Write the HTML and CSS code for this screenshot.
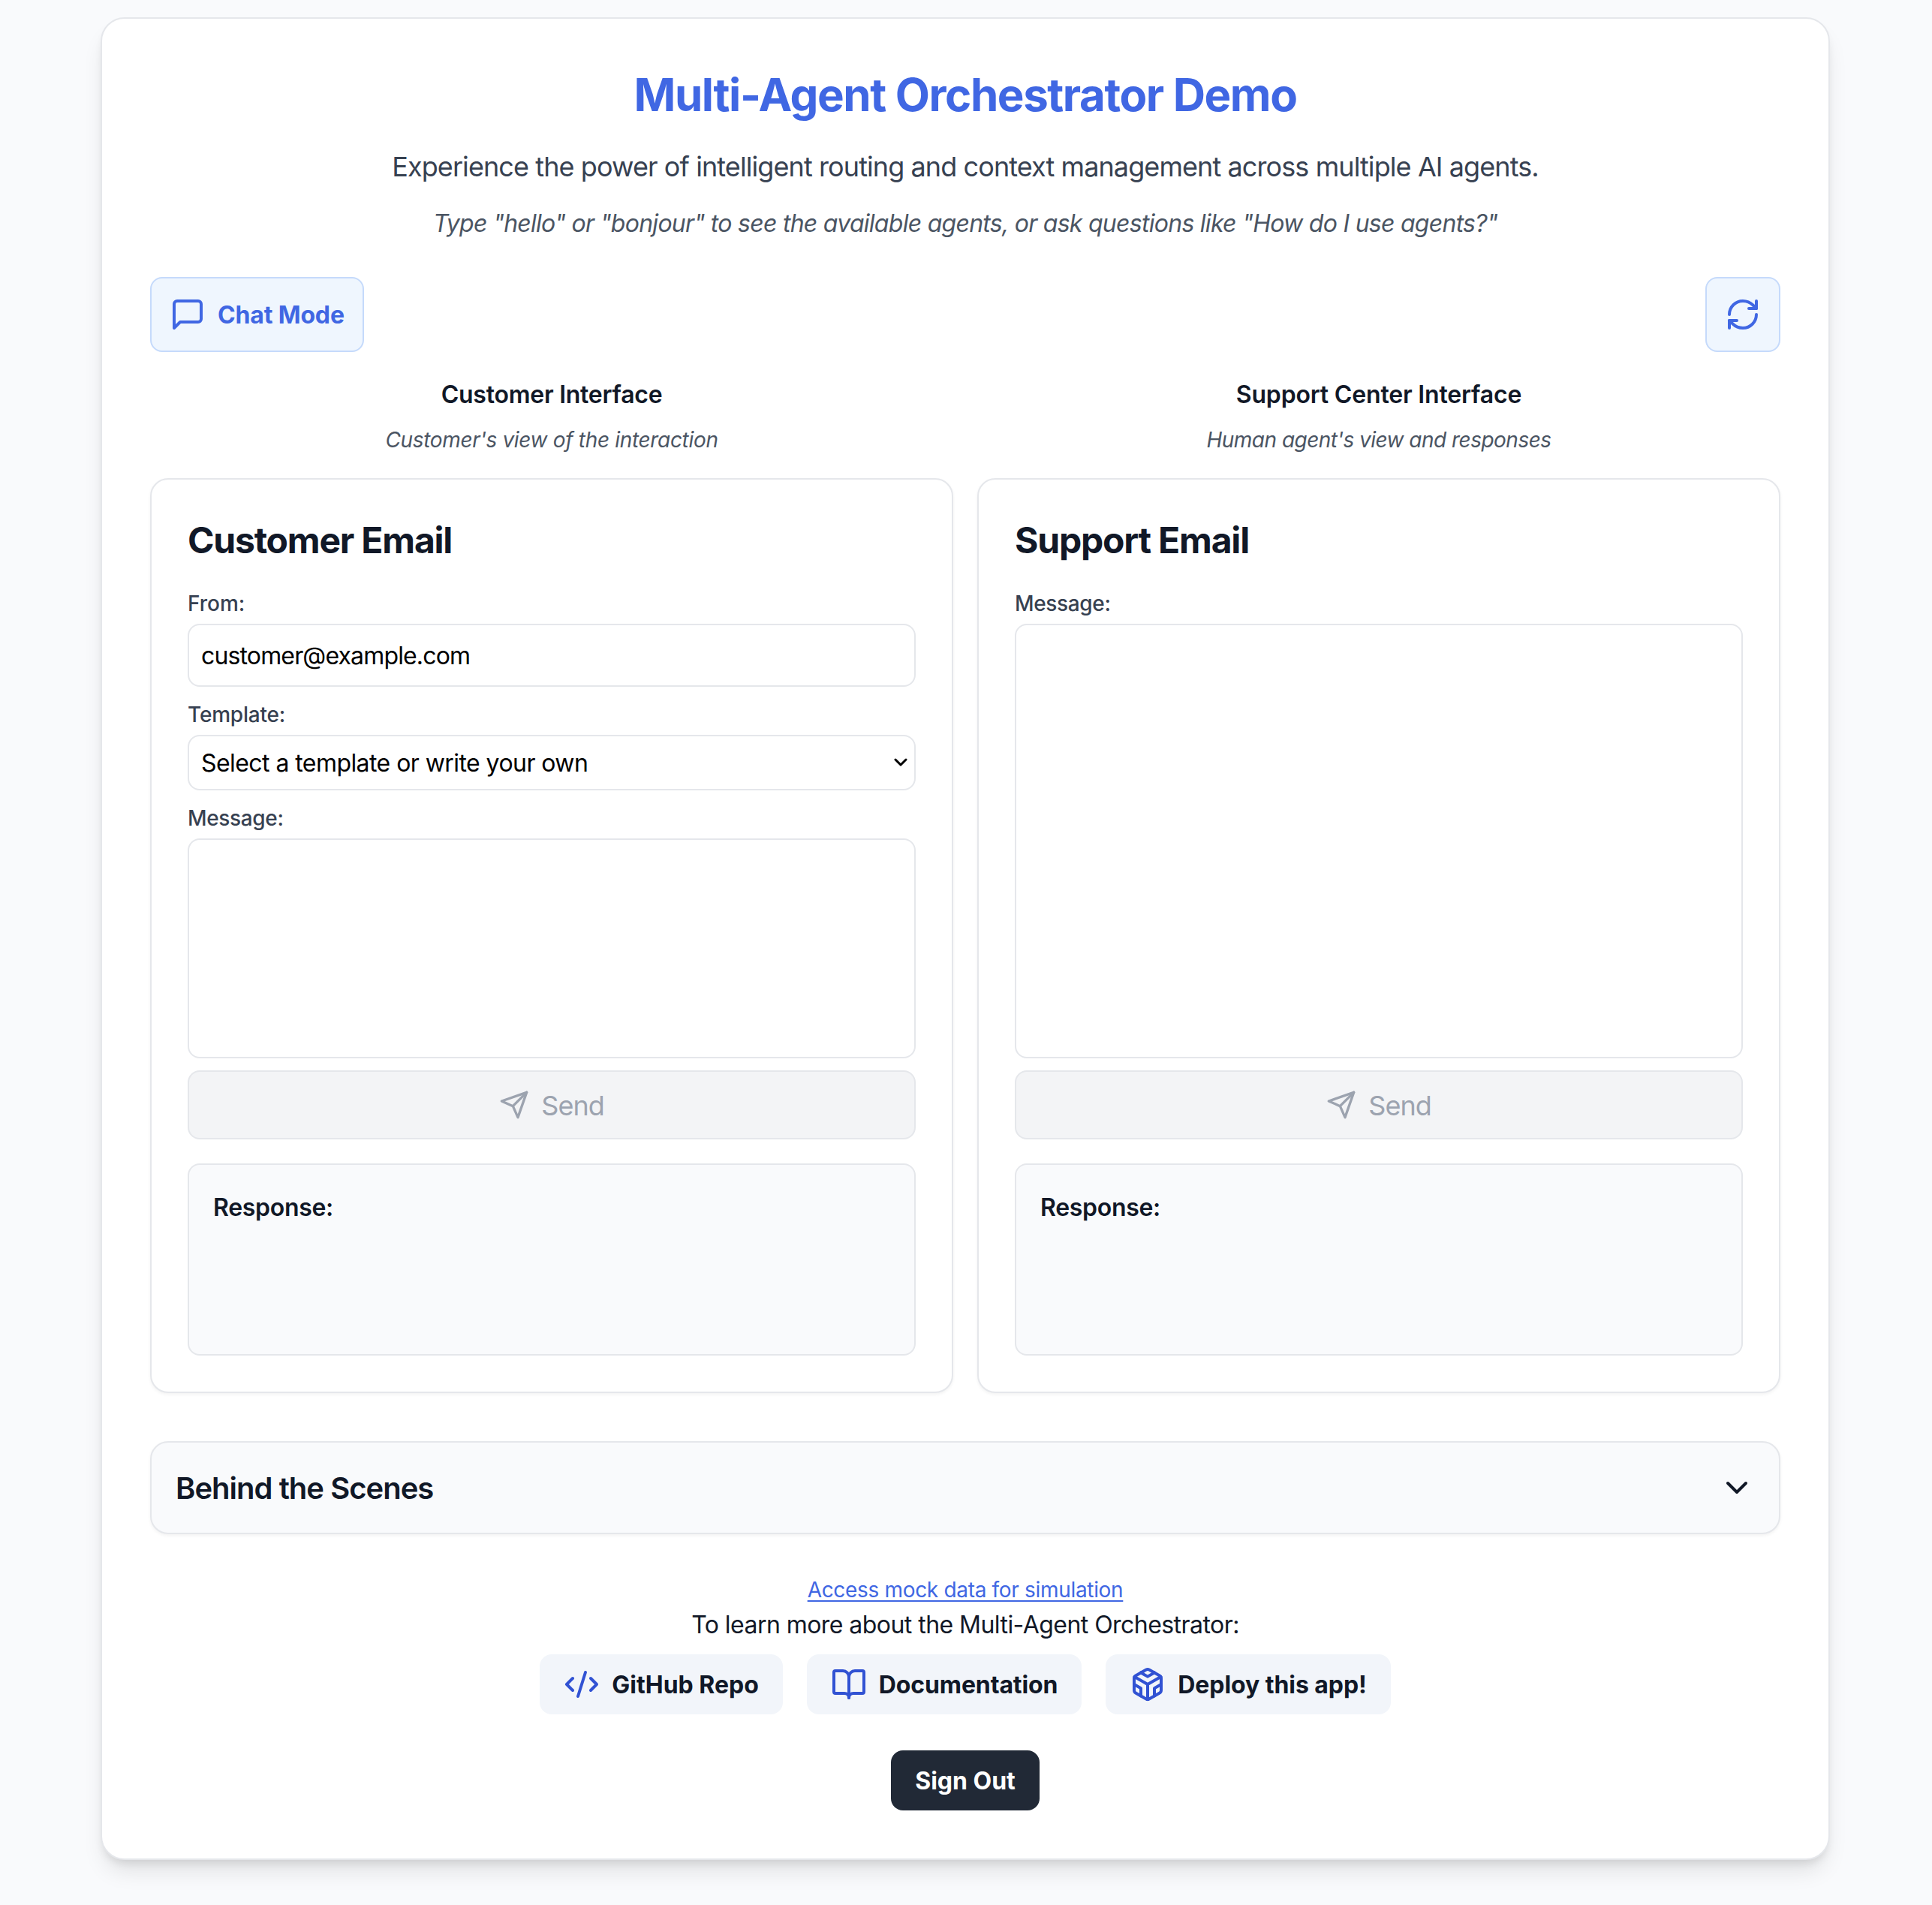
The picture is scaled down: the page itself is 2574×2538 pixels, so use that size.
FILE: index.html
```html
<!DOCTYPE html>
<html lang="en">
<head>
<meta charset="utf-8">
<title>Multi-Agent Orchestrator Demo</title>
<link rel="stylesheet" href="styles.css">
</head>
<body>
<main class="card">
  <header class="intro">
    <h1 class="title">Multi-Agent Orchestrator Demo</h1>
    <p class="subtitle">Experience the power of intelligent routing and context management across multiple AI agents.</p>
    <p class="hint">Type "hello" or "bonjour" to see the available agents, or ask questions like "How do I use agents?"</p>
  </header>

  <div class="toolbar">
    <button class="tool-btn" type="button">
      <svg class="icon" viewBox="0 0 24 24"><path d="M21 15a2 2 0 0 1-2 2H7l-4 4V5a2 2 0 0 1 2-2h14a2 2 0 0 1 2 2z"/></svg>
      <span class="btn-text">Chat Mode</span>
    </button>
    <button class="tool-btn" type="button" aria-label="Reset">
      <svg class="icon" viewBox="0 0 24 24"><path d="M3 12a9 9 0 0 1 9-9 9.75 9.75 0 0 1 6.74 2.74L21 8"/><path d="M21 3v5h-5"/><path d="M21 12a9 9 0 0 1-9 9 9.75 9.75 0 0 1-6.74-2.74L3 16"/><path d="M8 16H3v5"/></svg>
    </button>
  </div>

  <div class="columns">
    <section class="column">
      <h2 class="col-title col-title-customer">Customer Interface</h2>
      <p class="col-sub">Customer's view of the interaction</p>
      <div class="panel">
        <h3 class="panel-title">Customer Email</h3>
        <label class="label label-from" for="from">From:</label>
        <input class="field input" id="from" type="text" value="customer@example.com">
        <label class="label label-next">Template:</label>
        <div class="field select">
          <span class="btn-text">Select a template or write your own</span>
          <svg class="caret" viewBox="0 0 20 14"><path d="M3 3l7 7 7-7"/></svg>
        </div>
        <label class="label label-next label-message" for="msg1">Message:</label>
        <textarea class="field area" id="msg1"></textarea>
        <button class="send" type="button" disabled>
          <svg class="icon icon-sm" viewBox="0 0 24 24"><path d="m22 2-7 20-4-9-9-4Z"/><path d="M22 2 11 13"/></svg>
          <span class="btn-text">Send</span>
        </button>
        <div class="response"><h4 class="response-title">Response:</h4></div>
      </div>
    </section>
    <section class="column">
      <h2 class="col-title">Support Center Interface</h2>
      <p class="col-sub col-sub-support">Human agent's view and responses</p>
      <div class="panel">
        <h3 class="panel-title">Support Email</h3>
        <label class="label label-message" for="msg2">Message:</label>
        <textarea class="field area" id="msg2"></textarea>
        <button class="send" type="button" disabled>
          <svg class="icon icon-sm" viewBox="0 0 24 24"><path d="m22 2-7 20-4-9-9-4Z"/><path d="M22 2 11 13"/></svg>
          <span class="btn-text">Send</span>
        </button>
        <div class="response"><h4 class="response-title">Response:</h4></div>
      </div>
    </section>
  </div>

  <section class="scenes">
    <h2 class="scenes-title">Behind the Scenes</h2>
    <svg class="icon" viewBox="0 0 24 24"><path d="m6 9 6 6 6-6"/></svg>
  </section>

  <footer class="footer">
    <div class="footer-line"><a class="mock-link" href="#">Access mock data for simulation</a></div>
    <p class="footer-line footer-text">To learn more about the Multi-Agent Orchestrator:</p>
    <nav class="links">
      <a class="chip" href="#">
        <svg class="icon" viewBox="0 0 24 24"><path d="m18 16 4-4-4-4"/><path d="m6 8-4 4 4 4"/><path d="m14.5 4-5 16"/></svg>
        <span class="btn-text">GitHub Repo</span>
      </a>
      <a class="chip chip-docs" href="#">
        <svg class="icon" viewBox="0 0 24 24"><path d="M12 7v14"/><path d="M3 18a1 1 0 0 1-1-1V4a1 1 0 0 1 1-1h5a4 4 0 0 1 4 4 4 4 0 0 1 4-4h5a1 1 0 0 1 1 1v13a1 1 0 0 1-1 1h-6a3 3 0 0 0-3 3 3 3 0 0 0-3-3z"/></svg>
        <span class="btn-text">Documentation</span>
      </a>
      <a class="chip chip-deploy" href="#">
        <svg class="icon" viewBox="0 0 24 24"><path d="M21 16V8a2 2 0 0 0-1-1.73l-7-4a2 2 0 0 0-2 0l-7 4A2 2 0 0 0 3 8v8a2 2 0 0 0 1 1.73l7 4a2 2 0 0 0 2 0l7-4A2 2 0 0 0 21 16z"/><path d="M7.5 4.21 12 6.81l4.5-2.6"/><path d="M7.5 19.79V14.6L3 12"/><path d="m21 12-4.5 2.6v5.19"/><path d="M3.27 6.96 12 12.01l8.73-5.05"/><path d="M12 22.08V12"/></svg>
        <span class="btn-text">Deploy this app!</span>
      </a>
    </nav>
    <button class="signout" type="button">Sign Out</button>
  </footer>
</main>
</body>
</html>
```

FILE: styles.css
```css
* { box-sizing: border-box; margin: 0; padding: 0; }

body {
  background: #f9fafc;
  color: #111827;
  font-family: Inter, "Liberation Sans", sans-serif;
  font-size: 32px;
  line-height: 48px;
  padding: 23px 136px 60px 134px;
}

button, input, textarea { font: inherit; }

.icon {
  width: 48px;
  height: 48px;
  flex: none;
  fill: none;
  stroke: currentColor;
  stroke-width: 2;
  stroke-linecap: round;
  stroke-linejoin: round;
}
.icon-sm { width: 40px; height: 40px; }

.btn-text { line-height: 46px; padding-top: 2px; }

.card {
  background: #fff;
  border: 2px solid #e5e7eb;
  border-radius: 32px;
  padding: 64px;
  box-shadow: 0 20px 30px -6px rgba(0, 0, 0, .1), 0 8px 12px -4px rgba(0, 0, 0, .1);
}

.intro { text-align: center; padding-top: 1px; }
.title {
  color: #4067e3;
  font-size: 60px;
  font-weight: 700;
  line-height: 72px;
  letter-spacing: -1.42px;
}
.subtitle {
  color: #374151;
  font-size: 36px;
  line-height: 56px;
  letter-spacing: -.91px;
  margin-top: 32px;
}
.hint {
  color: #4b5563;
  font-style: italic;
  letter-spacing: -.727px;
  margin-top: 24px;
}

.toolbar { display: flex; justify-content: space-between; margin-top: 47px; }
.tool-btn {
  display: flex;
  align-items: center;
  gap: 16px;
  padding: 24px;
  border: 2px solid #c5dafb;
  border-radius: 16px;
  background: #eff6fe;
  color: #4067e3;
  font-weight: 700;
  letter-spacing: -.15px;
}

.columns { display: grid; grid-template-columns: 1fr 1fr; gap: 32px; margin-top: 33px; }
.column { display: flex; flex-direction: column; }
.col-title { font-size: 32px; font-weight: 600; text-align: center; letter-spacing: -.18px; }
.col-title-customer { letter-spacing: -.25px; }
.col-sub {
  color: #4b5563;
  font-size: 28px;
  font-style: italic;
  line-height: 40px;
  letter-spacing: -.333px;
  text-align: center;
  margin-top: 16px;
}
.col-sub-support { letter-spacing: -.52px; }

.panel {
  display: flex;
  flex-direction: column;
  height: 1219px;
  margin-top: 31px;
  padding: 49px 48px 48px;
  border: 2px solid #e5e7eb;
  border-radius: 24px;
  background: #fff;
  box-shadow: 0 2px 4px rgba(0, 0, 0, .05);
}
.panel-title {
  font-size: 48px;
  font-weight: 700;
  line-height: 64px;
  letter-spacing: -1.2px;
  margin-bottom: 32px;
}
.label {
  color: #374151;
  font-size: 28px;
  font-weight: 500;
  line-height: 40px;
  letter-spacing: -.2px;
  margin-bottom: 7px;
}
.label-from { letter-spacing: 0; }
.label-message { letter-spacing: -.35px; }
.label-next { margin-top: 17px; }
.field {
  width: 100%;
  border: 2px solid #e5e7eb;
  border-radius: 16px;
  background: #fff;
  color: #000;
}
.input { height: 84px; padding: 16px; letter-spacing: -.851px; outline: none; }
.select {
  display: flex;
  align-items: center;
  justify-content: space-between;
  height: 74px;
  padding: 0 8px 0 16px;
  letter-spacing: -.563px;
}
.caret { width: 20px; height: 14px; fill: none; stroke: #000; stroke-width: 3; stroke-linecap: round; stroke-linejoin: round; }
.area { display: block; flex: 1; min-height: 0; padding: 16px; resize: none; outline: none; }
.send {
  display: flex;
  align-items: center;
  justify-content: center;
  gap: 16px;
  height: 92px;
  margin-top: 16px;
  border: 2px solid #e5e7eb;
  border-radius: 16px;
  background: #f3f4f6;
  color: #9ca3af;
  font-size: 36px;
  font-weight: 400;
  letter-spacing: -1px;
}
.response {
  height: 256px;
  margin-top: 32px;
  padding: 33px 32px 32px;
  border: 2px solid #e5e7eb;
  border-radius: 16px;
  background: #f9fafc;
}
.response-title { font-size: 32px; font-weight: 600; letter-spacing: -.3px; }

.scenes {
  display: flex;
  align-items: center;
  justify-content: space-between;
  height: 124px;
  margin-top: 64px;
  padding: 0 32px;
  border: 2px solid #e5e7eb;
  border-radius: 24px;
  background: #f9fafc;
  box-shadow: 0 2px 4px rgba(0, 0, 0, .05);
}
.scenes-title { font-size: 40px; font-weight: 600; line-height: 56px; letter-spacing: -.98px; padding-top: 2px; }

.footer { display: flex; flex-direction: column; align-items: center; margin-top: 49px; }
.footer-line { height: 48px; }
.mock-link {
  color: #4067e3;
  font-size: 28px;
  letter-spacing: -.32px;
  text-decoration: underline;
  text-decoration-thickness: 2px;
  text-underline-offset: 4px;
}
.footer-text { letter-spacing: -.548px; }
.links { display: flex; gap: 32px; margin-top: 15px; }
.chip {
  display: flex;
  align-items: center;
  gap: 16px;
  padding: 16px 32px;
  border-radius: 16px;
  background: #f2f5fa;
  color: #111827;
  font-weight: 700;
  text-decoration: none;
}
.chip-docs { letter-spacing: -.12px; }
.chip-deploy { letter-spacing: -.07px; }
.chip .icon { color: #3152d3; }
.signout {
  height: 80px;
  margin-top: 48px;
  padding: 2px 32px 0;
  border: 0;
  border-radius: 16px;
  background: #212936;
  color: #fff;
  font-weight: 700;
}
```
